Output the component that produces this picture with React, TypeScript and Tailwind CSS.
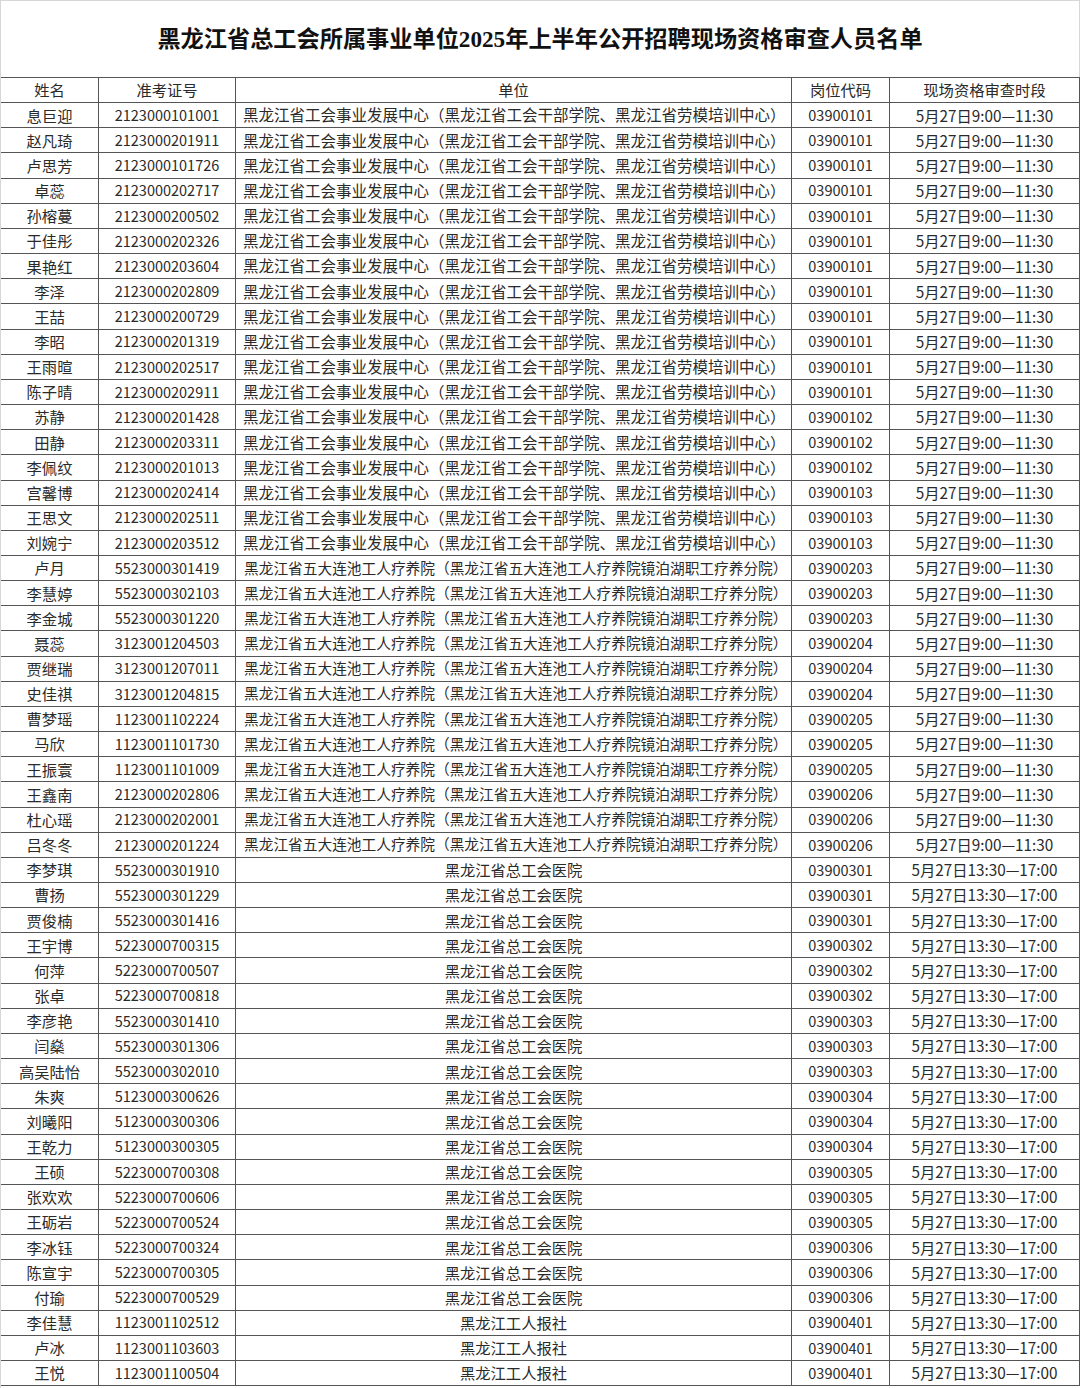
import React from "react";

const A = "黑龙江省工会事业发展中心（黑龙江省工会干部学院、黑龙江省劳模培训中心）";
const B = "黑龙江省五大连池工人疗养院（黑龙江省五大连池工人疗养院镜泊湖职工疗养分院）";
const C = "黑龙江省总工会医院";
const D = "黑龙江工人报社";
const AM = "5月27日9:00—11:30";
const PM = "5月27日13:30—17:00";

type Row = [string, string, string, string, string];

const rows: Row[] = [
  ["息巨迎", "2123000101001", A, "03900101", AM],
  ["赵凡琦", "2123000201911", A, "03900101", AM],
  ["卢思芳", "2123000101726", A, "03900101", AM],
  ["卓蕊", "2123000202717", A, "03900101", AM],
  ["孙榕蔓", "2123000200502", A, "03900101", AM],
  ["于佳彤", "2123000202326", A, "03900101", AM],
  ["果艳红", "2123000203604", A, "03900101", AM],
  ["李泽", "2123000202809", A, "03900101", AM],
  ["王喆", "2123000200729", A, "03900101", AM],
  ["李昭", "2123000201319", A, "03900101", AM],
  ["王雨暄", "2123000202517", A, "03900101", AM],
  ["陈子晴", "2123000202911", A, "03900101", AM],
  ["苏静", "2123000201428", A, "03900102", AM],
  ["田静", "2123000203311", A, "03900102", AM],
  ["李佩纹", "2123000201013", A, "03900102", AM],
  ["宫馨博", "2123000202414", A, "03900103", AM],
  ["王思文", "2123000202511", A, "03900103", AM],
  ["刘婉宁", "2123000203512", A, "03900103", AM],
  ["卢月", "5523000301419", B, "03900203", AM],
  ["李慧婷", "5523000302103", B, "03900203", AM],
  ["李金城", "5523000301220", B, "03900203", AM],
  ["聂蕊", "3123001204503", B, "03900204", AM],
  ["贾继瑞", "3123001207011", B, "03900204", AM],
  ["史佳祺", "3123001204815", B, "03900204", AM],
  ["曹梦瑶", "1123001102224", B, "03900205", AM],
  ["马欣", "1123001101730", B, "03900205", AM],
  ["王振寰", "1123001101009", B, "03900205", AM],
  ["王鑫南", "2123000202806", B, "03900206", AM],
  ["杜心瑶", "2123000202001", B, "03900206", AM],
  ["吕冬冬", "2123000201224", B, "03900206", AM],
  ["李梦琪", "5523000301910", C, "03900301", PM],
  ["曹扬", "5523000301229", C, "03900301", PM],
  ["贾俊楠", "5523000301416", C, "03900301", PM],
  ["王宇博", "5223000700315", C, "03900302", PM],
  ["何萍", "5223000700507", C, "03900302", PM],
  ["张卓", "5223000700818", C, "03900302", PM],
  ["李彦艳", "5523000301410", C, "03900303", PM],
  ["闫燊", "5523000301306", C, "03900303", PM],
  ["高吴陆怡", "5523000302010", C, "03900303", PM],
  ["朱爽", "5123000300626", C, "03900304", PM],
  ["刘曦阳", "5123000300306", C, "03900304", PM],
  ["王乾力", "5123000300305", C, "03900304", PM],
  ["王硕", "5223000700308", C, "03900305", PM],
  ["张欢欢", "5223000700606", C, "03900305", PM],
  ["王砺岩", "5223000700524", C, "03900305", PM],
  ["李冰钰", "5223000700324", C, "03900306", PM],
  ["陈宣宇", "5223000700305", C, "03900306", PM],
  ["付瑜", "5223000700529", C, "03900306", PM],
  ["李佳慧", "1123001102512", D, "03900401", PM],
  ["卢冰", "1123001103603", D, "03900401", PM],
  ["王悦", "1123001100504", D, "03900401", PM],
];

const rowCls =
  "grid grid-cols-[98px_137px_556px_98px_190px] h-[25.17px] border-b border-[#555555]";
const cell =
  "border-r border-[#555555] flex items-center justify-center whitespace-nowrap overflow-hidden";

export default function App() {
  return (
    <div
      className="w-[1080px] h-[1388px] bg-white border-l border-t border-[#d6d6d6] text-[#2a2a2a] overflow-hidden"
      style={{ fontFamily: '"Noto Sans CJK SC", "Noto Sans", sans-serif' }}
    >
      <div className="h-[76px] flex items-center justify-center border-r border-[#d6d6d6]">
        <h1
          className="text-[23.2px] font-bold text-[#111111] pt-[1px]"
          style={{ fontFamily: '"Liberation Serif", "Noto Sans CJK SC", serif' }}
        >
          黑龙江省总工会所属事业单位2025年上半年公开招聘现场资格审查人员名单
        </h1>
      </div>
      <div className="border-t border-[#555555] text-[15.3px] leading-none">
        <div className={rowCls}>
          <div className={cell}>姓名</div>
          <div className={cell}>准考证号</div>
          <div className={cell}>单位</div>
          <div className={cell}>岗位代码</div>
          <div className={cell}>现场资格审查时段</div>
        </div>
        {rows.map((r, i) => {
          const isA = r[2] === A;
          const isB = r[2] === B;
          return (
            <div key={i} className={rowCls}>
              <div className={cell}>{r[0]}</div>
              <div className={cell + " text-[14.5px]"}>{r[1]}</div>
              {isA ? (
                <div className="border-r border-[#555555] flex items-center justify-start pl-[7px] whitespace-nowrap overflow-hidden text-[15.5px]">
                  {r[2]}
                </div>
              ) : isB ? (
                <div className="border-r border-[#555555] flex items-center justify-start pl-[8px] whitespace-nowrap overflow-hidden text-[14.7px]">
                  {r[2]}
                </div>
              ) : (
                <div className={cell}>{r[2]}</div>
              )}
              <div className={cell + " text-[14.5px]"}>{r[3]}</div>
              <div className={cell}>{r[4]}</div>
            </div>
          );
        })}
      </div>
    </div>
  );
}
